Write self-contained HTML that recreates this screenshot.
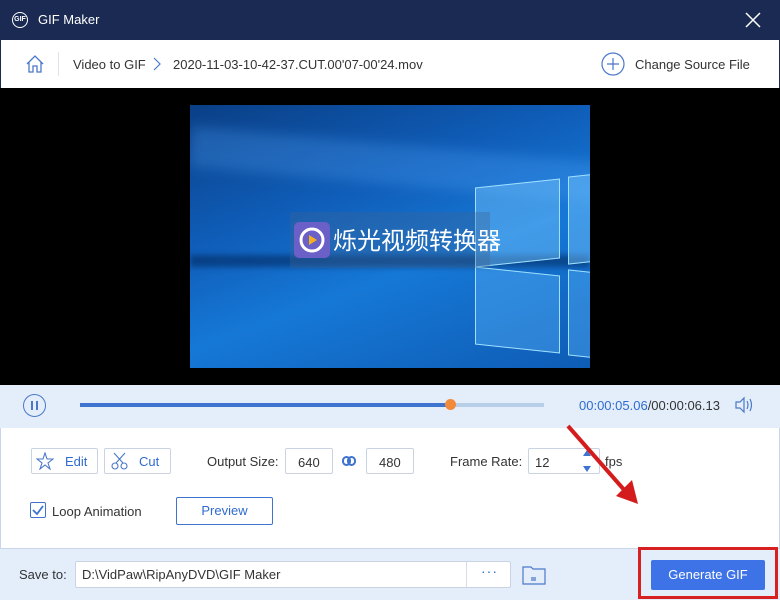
<!DOCTYPE html><html><head><meta charset="utf-8"><style>
*{box-sizing:border-box;margin:0;padding:0}
body{width:780px;height:600px;overflow:hidden;font-family:"Liberation Sans","Noto Sans CJK SC",sans-serif;font-size:13px;color:#333;position:relative;background:#fff}
.abs{position:absolute}
.title{left:0;top:0;width:780px;height:40px;background:#1b2a52;color:#fff}
.nav{left:0;top:40px;width:780px;height:48px;background:#fff;border-left:1px solid #1b2a52;border-right:1px solid #1b2a52}
.video{left:0;top:88px;width:780px;height:297px;background:#000}
.img{left:190px;top:105px;width:400px;height:263px;overflow:hidden;background:linear-gradient(160deg,#0a3f86 0%,#0f5db8 35%,#1678d6 60%,#0e5cb5 100%)}
.ctrl{left:0;top:385px;width:780px;height:43px;background:#e4eefb}
.set{left:0;top:428px;width:780px;height:120px;background:#fff;border-left:1px solid #c9d6ea;border-right:1px solid #c9d6ea}
.bot{left:0;top:548px;width:780px;height:52px;background:#e4eefb;border-top:1px solid #c9d6ea}
.box{border:1px solid #c9d3e2;background:#fff;border-radius:2px}
.blue{color:#2f6bd0}
</style></head><body>
<div class="abs title">
 <div class="abs" style="left:12px;top:12px;width:16px;height:16px;border:1.5px solid #fff;border-radius:50%;font-size:7px;line-height:13px;text-align:center;font-weight:bold">GIF</div>
 <div class="abs" style="left:38px;top:12px;font-size:13px">GIF Maker</div>
 <svg class="abs" style="left:745px;top:12px" width="16" height="16"><path d="M1 1L15 15M15 1L1 15" stroke="#fff" stroke-width="1.5"/></svg>
</div>
<div class="abs nav">
 <svg class="abs" style="left:24px;top:14px" width="20" height="20" fill="none" stroke="#4a78c8" stroke-width="1.3"><path d="M2 10L10 2L18 10M4 8V18H8V12H12V18H16V8"/></svg>
 <div class="abs" style="left:57px;top:12px;width:1px;height:24px;background:#dde3ee"></div>
 <div class="abs" style="left:72px;top:17px">Video to GIF</div>
 <svg class="abs" style="left:151px;top:17px" width="10" height="14" fill="none" stroke="#4a78c8" stroke-width="1.2"><path d="M2 1L8 7L2 13"/></svg>
 <div class="abs" style="left:172px;top:17px">2020-11-03-10-42-37.CUT.00'07-00'24.mov</div>
 <svg class="abs" style="left:600px;top:12px" width="24" height="24" fill="none" stroke="#4a78c8" stroke-width="1.2"><circle cx="12" cy="12" r="11"/><path d="M12 6V18M6 12H18"/></svg>
 <div class="abs" style="left:634px;top:17px">Change Source File</div>
</div>
<div class="abs video"></div>
<div class="abs img">
 <div class="abs" style="left:0;top:40px;width:420px;height:40px;background:rgba(90,170,255,.25);transform:rotate(5deg);filter:blur(6px)"></div>
 <div class="abs" style="left:0;top:150px;width:400px;height:12px;background:rgba(0,30,80,.5);filter:blur(3px)"></div>
 <div class="abs" style="left:285px;top:78px;width:85px;height:80px;background:rgba(120,200,255,.45);border:1px solid #9fe0ff;transform:skewY(-6deg)"></div>
 <div class="abs" style="left:378px;top:70px;width:30px;height:88px;background:rgba(120,200,255,.45);border:1px solid #9fe0ff;transform:skewY(-6deg)"></div>
 <div class="abs" style="left:285px;top:166px;width:85px;height:78px;background:rgba(90,180,250,.4);border:1px solid #9fe0ff;transform:skewY(6deg)"></div>
 <div class="abs" style="left:378px;top:166px;width:30px;height:86px;background:rgba(90,180,250,.4);border:1px solid #9fe0ff;transform:skewY(6deg)"></div>
 <div class="abs" style="left:100px;top:107px;width:200px;height:56px;background:rgba(60,100,150,.35)"></div>
 <svg class="abs" style="left:104px;top:117px" width="36" height="36"><rect width="36" height="36" rx="5" fill="#6b5fc8"/><circle cx="18" cy="18" r="11" fill="none" stroke="#fff" stroke-width="3"/><path d="M15 13L23 18L15 23Z" fill="#f2b021"/></svg>
 <div class="abs" style="left:143px;top:116px;color:#fff;font-size:24px;font-family:'Noto Sans CJK SC',sans-serif">烁光视频转换器</div>
</div>
<div class="abs ctrl">
 <div class="abs" style="left:23px;top:9px;width:23px;height:23px;border:1.3px solid #4a78c8;border-radius:50%"></div>
 <div class="abs" style="left:31px;top:16px;width:2px;height:9px;background:#4a78c8"></div><div class="abs" style="left:36px;top:16px;width:2px;height:9px;background:#4a78c8"></div>
 <div class="abs" style="left:80px;top:18px;width:464px;height:4px;background:#b8cfe9"></div>
 <div class="abs" style="left:80px;top:18px;width:370px;height:4px;background:#3e73cf"></div>
 <div class="abs" style="left:445px;top:14px;width:11px;height:11px;border-radius:50%;background:#f28a3c"></div>
 <div class="abs" style="left:579px;top:13px"><span class="blue">00:00:05.06</span>/00:00:06.13</div>
 <svg class="abs" style="left:734px;top:11px" width="20" height="18" fill="none" stroke="#4a78c8" stroke-width="1.2"><path d="M2 6H6L10 2V16L6 12H2Z"/><path d="M13 5Q15 9 13 13M16 3Q19 9 16 15"/></svg>
</div>
<div class="abs set">
 <div class="abs box" style="left:30px;top:20px;width:67px;height:26px"></div>
 <svg class="abs" style="left:35px;top:24px" width="18" height="18" fill="none" stroke="#4a78c8" stroke-width="1.1"><path d="M9 1L11 7L17 7L12 11L14 17L9 13L4 17L6 11L1 7L7 7Z"/></svg>
 <div class="abs blue" style="left:64px;top:26px">Edit</div>
 <div class="abs box" style="left:103px;top:20px;width:67px;height:26px"></div>
 <svg class="abs" style="left:110px;top:24px" width="18" height="18" fill="none" stroke="#4a78c8" stroke-width="1.1"><circle cx="4" cy="14" r="3"/><circle cx="13" cy="14" r="3"/><path d="M5 11L14 1M12 11L3 1"/></svg>
 <div class="abs blue" style="left:138px;top:26px">Cut</div>
 <div class="abs" style="left:206px;top:26px">Output Size:</div>
 <div class="abs box" style="left:284px;top:20px;width:48px;height:26px;padding:6px 12px">640</div>
 <svg class="abs" style="left:341px;top:28px" width="14" height="10" fill="none" stroke="#3e73cf" stroke-width="2"><rect x="1" y="1" width="7" height="8" rx="3.5"/><rect x="6" y="1" width="7" height="8" rx="3.5"/></svg>
 <div class="abs box" style="left:365px;top:20px;width:48px;height:26px;padding:6px 12px">480</div>
 <div class="abs" style="left:449px;top:26px">Frame Rate:</div>
 <div class="abs box" style="left:527px;top:20px;width:72px;height:26px;padding:6px 6px">12</div>
 <div class="abs" style="left:582px;top:22px;width:0;height:0;border:4px solid transparent;border-bottom:6px solid #3e73cf;border-top:0"></div>
 <div class="abs" style="left:582px;top:38px;width:0;height:0;border:4px solid transparent;border-top:6px solid #3e73cf;border-bottom:0"></div>
 <div class="abs" style="left:604px;top:26px">fps</div>
 <div class="abs" style="left:29px;top:74px;width:16px;height:16px;border:1.3px solid #3e73cf;border-radius:2px;background:#fff"></div>
 <svg class="abs" style="left:31px;top:76px" width="12" height="12" fill="none" stroke="#3e73cf" stroke-width="1.8"><path d="M1 6L5 10L11 2"/></svg>
 <div class="abs" style="left:51px;top:76px">Loop Animation</div>
 <div class="abs" style="left:175px;top:69px;width:97px;height:28px;border:1px solid #3e73cf;border-radius:2px;text-align:center;line-height:26px" ><span class="blue">Preview</span></div>
</div>
<div class="abs bot">
 <div class="abs" style="left:19px;top:18px">Save to:</div>
 <div class="abs box" style="left:75px;top:12px;width:436px;height:27px"></div>
 <div class="abs" style="left:82px;top:18px">D:\VidPaw\RipAnyDVD\GIF Maker</div>
 <div class="abs" style="left:466px;top:13px;width:1px;height:25px;background:#d6dde8"></div>
 <div class="abs blue" style="left:481px;top:14px;font-size:14px;letter-spacing:1px">···</div>
 <svg class="abs" style="left:522px;top:14px" width="24" height="22" fill="none" stroke="#4a78c8" stroke-width="1.2"><path d="M1 4H9L11 6H23V21H1Z"/><path d="M9 15H14M9 17H14" /></svg>
 <div class="abs" style="left:651px;top:11px;width:114px;height:30px;background:#3e73e8;border-radius:2px;color:#fff;text-align:center;line-height:30px">Generate GIF</div>
</div>
<div class="abs" style="left:638px;top:547px;width:140px;height:52px;border:3px solid #d92020"></div>
<svg class="abs" style="left:560px;top:420px" width="90" height="90"><path d="M8 6L66 72" stroke="#d41c1c" stroke-width="4"/><path d="M56 76L78 84L72 60Z" fill="#d41c1c"/></svg>
</body></html>
